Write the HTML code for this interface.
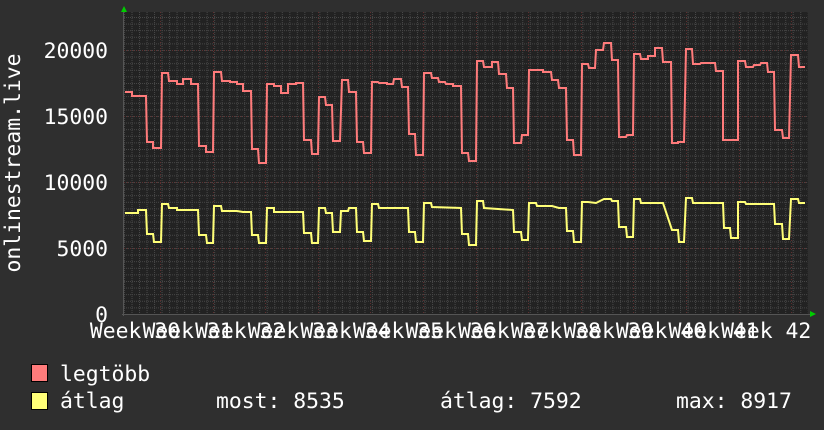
<!DOCTYPE html>
<html><head><meta charset="utf-8"><style>
html,body{margin:0;padding:0;background:#2f2f2f;}
svg{display:block;}
text{font-family:"DejaVu Sans Mono","Liberation Mono",monospace;fill:#fff;font-size:21.4px;}
</style></head><body>
<svg width="824" height="430" viewBox="0 0 824 430" xmlns="http://www.w3.org/2000/svg">
<defs>
<pattern id="minx" x="124" y="0" width="7.514" height="430" patternUnits="userSpaceOnUse">
<line x1="0.5" y1="0" x2="0.5" y2="430" stroke="#484848" stroke-width="1" stroke-dasharray="1,1"/>
</pattern>
<pattern id="miny" x="0" y="314" width="824" height="6.6" patternUnits="userSpaceOnUse">
<line x1="0" y1="0.5" x2="824" y2="0.5" stroke="#484848" stroke-width="1" stroke-dasharray="1,1"/>
</pattern>
</defs>
<rect x="124" y="12" width="684" height="302" fill="#222"/>
<rect x="124" y="12" width="684" height="302" fill="url(#minx)"/>
<rect x="124" y="12" width="684" height="302" fill="url(#miny)"/>
<g stroke="#5e2f2f" stroke-width="1" stroke-dasharray="1,2">
<line x1="124" y1="50.5" x2="808" y2="50.5"/>
<line x1="124" y1="116.5" x2="808" y2="116.5"/>
<line x1="124" y1="182.5" x2="808" y2="182.5"/>
<line x1="124" y1="248.5" x2="808" y2="248.5"/>
<line x1="160.5" y1="12" x2="160.5" y2="314"/>
<line x1="213.5" y1="12" x2="213.5" y2="314"/>
<line x1="265.5" y1="12" x2="265.5" y2="314"/>
<line x1="318.5" y1="12" x2="318.5" y2="314"/>
<line x1="370.5" y1="12" x2="370.5" y2="314"/>
<line x1="423.5" y1="12" x2="423.5" y2="314"/>
<line x1="476.5" y1="12" x2="476.5" y2="314"/>
<line x1="528.5" y1="12" x2="528.5" y2="314"/>
<line x1="581.5" y1="12" x2="581.5" y2="314"/>
<line x1="633.5" y1="12" x2="633.5" y2="314"/>
<line x1="686.5" y1="12" x2="686.5" y2="314"/>
<line x1="739.5" y1="12" x2="739.5" y2="314"/>
<line x1="791.5" y1="12" x2="791.5" y2="314"/>
</g>
<line x1="123.5" y1="10" x2="123.5" y2="316" stroke="#555" stroke-width="1"/>
<line x1="122" y1="314.5" x2="810" y2="314.5" stroke="#555" stroke-width="1"/>
<polygon points="121,12 127,12 124,6" fill="#00cc00"/>
<polygon points="810,311 810,317 816,314" fill="#00cc00"/>
<polyline fill="none" stroke="#ff7b7b" stroke-width="2" points="125,92 132,92 132,96 146,96 147,142 153,142 153,148 161,148 162,73 168,73 169,81 177,81 177,84 183,84 183,79 191,79 191,84 198,84 199,146 206,146 206,152 213,152 214,72 221,72 222,81 230,81 230,82 237,82 237,84 243,84 243,91 251,91 252,149 258,149 259,163 266,163 267,84 274,84 274,86 281,86 281,93 288,93 288,84 296,84 296,83 303,83 304,140 311,140 312,154 318,154 319,97 325,97 326,105 332,105 333,141 340,141 342,80 348,80 349,92 356,92 357,142 363,142 364,153 371,153 372,82 378,82 379,83 387,83 387,84 393,84 394,79 401,79 402,87 408,87 409,134 415,134 416,155 423,155 424,73 431,73 432,78 438,78 439,82 445,82 446,84 453,84 453,86 461,86 462,153 468,153 469,161 476,161 477,61 483,61 484,67 492,67 492,62 498,62 499,74 506,74 507,88 513,88 514,143 521,143 522,135 528,135 529,70 543,70 543,72 551,72 552,80 558,80 559,88 566,88 567,140 573,140 574,155 581,155 582,64 588,64 589,68 595,68 596,50 603,50 604,43 611,43 612,60 618,60 619,137 626,137 627,135 633,135 634,54 640,54 641,59 648,59 648,56 655,56 655,48 662,48 663,62 671,62 672,143 678,143 678,142 684,142 686,49 692,49 693,64 700,64 701,63 715,63 716,71 723,71 723,140 738,140 738,61 745,61 746,67 753,67 754,65 760,65 761,63 767,63 768,72 774,72 775,130 782,130 783,138 789,138 791,55 798,55 799,67 805,67"/>
<polyline fill="none" stroke="#ffff77" stroke-width="2" points="125,213 138,213 138,210 146,210 147,234 153,234 154,242 161,242 162,204 168,204 169,208 177,208 177,210 198,210 199,235 206,235 207,243 213,243 214,206 221,206 222,211 237,211 243,212 251,212 252,235 258,235 259,243 266,243 267,208 274,208 274,212 303,212 304,233 311,233 312,243 318,243 319,208 325,208 326,213 332,213 333,232 340,232 341,211 348,211 349,208 356,208 357,232 363,232 364,241 371,241 372,204 378,204 379,208 408,208 409,232 415,232 416,242 423,242 424,203 431,203 432,207 461,208 462,234 468,234 469,245 476,245 477,201 483,201 484,208 513,210 514,232 521,232 522,240 528,240 529,203 536,203 537,206 552,206 559,208 566,208 567,231 573,231 574,242 581,242 582,202 588,202 596,203 604,199 611,199 612,201 618,201 619,227 626,227 627,237 633,237 634,199 640,199 641,203 663,203 672,230 678,230 679,242 684,242 686,198 692,198 693,203 723,203 724,228 730,228 731,238 738,238 738,202 745,202 746,204 774,204 775,224 782,224 783,239 789,239 791,199 798,199 799,203 805,203"/>
<g text-anchor="end">
<text x="108" y="58">20000</text>
<text x="108" y="124">15000</text>
<text x="108" y="190">10000</text>
<text x="108" y="256">5000</text>
<text x="108" y="322">0</text>
</g>
<text transform="translate(20,163) rotate(-90)" text-anchor="middle">onlinestream.live</text>
<g text-anchor="middle">
<text x="135" y="338">Week 30</text>
<text x="187.6" y="338">Week 31</text>
<text x="240.2" y="338">Week 32</text>
<text x="292.8" y="338">Week 33</text>
<text x="345.4" y="338">Week 34</text>
<text x="398" y="338">Week 35</text>
<text x="450.6" y="338">Week 36</text>
<text x="503.2" y="338">Week 37</text>
<text x="555.8" y="338">Week 38</text>
<text x="608.4" y="338">Week 39</text>
<text x="661" y="338">Week 40</text>
<text x="713.6" y="338">Week 41</text>
<text x="766.2" y="338">Week 42</text>
</g>
<rect x="31.5" y="364.5" width="16" height="17" fill="#ff7b7b" stroke="#000" stroke-width="1"/>
<rect x="31.5" y="392.5" width="16" height="17" fill="#ffff77" stroke="#000" stroke-width="1"/>
<text x="60" y="381">legtöbb</text>
<text x="60" y="408">átlag</text>
<text x="216" y="408">most: 8535</text>
<text x="440" y="408">átlag: 7592</text>
<text x="676" y="408">max: 8917</text>
</svg>
</body></html>
